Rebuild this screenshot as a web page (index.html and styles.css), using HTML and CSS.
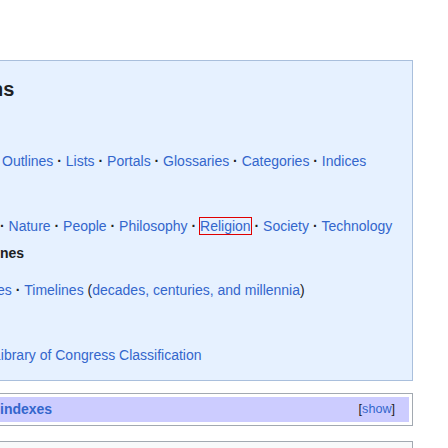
FILE: index.html
```html
<!DOCTYPE html>
<html>
<head>
<meta charset="utf-8">
<link rel="stylesheet" href="styles.css">
</head>
<body>
<div class="page">
  <div class="panel">
    <div class="heading"><span class="clip-n">ns</span></div>
    <div class="row row-outlines">
      <a>Outlines</a><b class="sep"> · </b><a>Lists</a><b class="sep"> · </b><a>Portals</a><b class="sep"> · </b><a>Glossaries</a><b class="sep"> · </b><a>Categories</a><b class="sep"> · </b><a>Indices</a>
    </div>
    <div class="row row-topics">
      <b class="sep">· </b><a>Nature</a><b class="sep"> · </b><a>People</a><b class="sep"> · </b><a>Philosophy</a><b class="sep"> · </b><a class="focus">Religion</a><b class="sep"> · </b><a>Society</a><b class="sep"> · </b><a>Technology</a>
    </div>
    <div class="row row-label">nes</div>
    <div class="row row-times">
      <a>es</a><b class="sep"> · </b><a>Timelines</a> (<a>decades, centuries, and millennia</a>)
    </div>
    <div class="row row-library">
      <a>Library of Congress Classification</a>
    </div>
  </div>

  <div class="navbox">
    <div class="navbox-title">
      <span class="title-text">indexes</span>
      <span class="navbar">[<a>show</a>]</span>
    </div>
  </div>

  <div class="navbox navbox-next"></div>
</div>
</body>
</html>
```
FILE: styles.css
```css
html, body {
  margin: 0;
  padding: 0;
  background: #ffffff;
  overflow: hidden;
}

body {
  font-family: "Liberation Sans", Arial, sans-serif;
  font-size: 14px;
  color: #202122;
}

a {
  color: #3366cc;
  text-decoration: none;
}

.page {
  height: 448px;
  overflow: hidden;
  padding-top: 60px;
  box-sizing: border-box;
}

.panel {
  box-sizing: border-box;
  width: 433px;
  margin-left: -20px;
  padding: 16px 0 15px 20px;
  background: #e6f1ff;
  border: 1px solid #a9bfdc;
  white-space: nowrap;
}

.heading {
  font-size: 20px;
  font-weight: bold;
  line-height: 24px;
  color: #202122;
}

.clip-n {
  margin-left: -10px;
}

.row {
  line-height: 20px;
}

.sep {
  font-weight: bold;
  color: #202122;
}

.row-outlines {
  margin-top: 50px;
  padding-left: 1px;
}

.row-topics {
  margin-top: 45px;
  margin-left: -1px;
}

.row-label {
  margin-top: 7px;
  margin-left: -1px;
  font-weight: bold;
}

.row-times {
  margin-top: 17px;
  margin-left: -4px;
}

.row-library {
  margin-top: 45px;
  margin-left: -8px;
}

.focus {
  outline: 1px solid #e00000;
}

.navbox {
  box-sizing: border-box;
  width: 433px;
  margin-left: -20px;
  margin-top: 12px;
  padding: 3px 3px 3px 20px;
  background: #ffffff;
  border: 1px solid #a2a9b1;
}

.navbox-title {
  display: flex;
  justify-content: space-between;
  align-items: center;
  height: 25px;
  margin-left: -17px;
  padding-left: 17px;
  padding-right: 14px;
  background: #ccccff;
  line-height: 25px;
}

.title-text {
  font-weight: bold;
  color: #3366cc;
  margin-left: -1px;
}

.navbar {
  font-size: 12.6px;
  color: #202122;
}

.navbox-next {
  margin-top: 15px;
  height: 20px;
  background: #f8f9fa;
}
```
